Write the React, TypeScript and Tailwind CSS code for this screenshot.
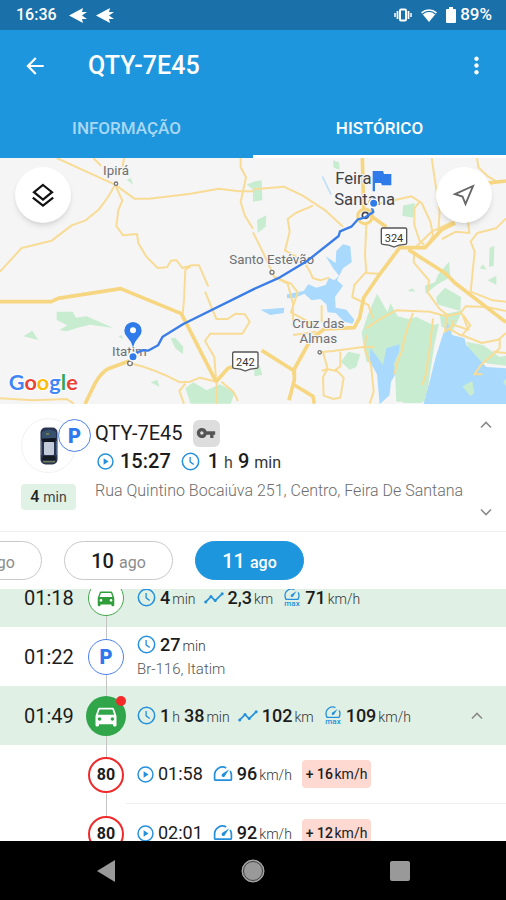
import React from 'react';
import { MdArrowBack, MdMoreVert, MdVpnKey, MdDirectionsCar } from 'react-icons/md';

interface Measure {
  value: string;
  unit?: string;
}

function ClockIcon({ className }: { className: string }) {
  return (
    <svg viewBox="0 0 20 20" className={className} fill="none" stroke="#2490dc" strokeWidth="1.6">
      <circle cx="10" cy="10" r="8.6" />
      <path d="M9.6 5.2v5.2l3.8 2.8" strokeWidth="1.4" />
    </svg>
  );
}

function PlayIcon({ className }: { className: string }) {
  return (
    <svg viewBox="0 0 20 20" className={className} fill="none" stroke="#2490dc" strokeWidth="1.7">
      <circle cx="10" cy="10" r="8.8" />
      <path d="M7.8 6.2v7.6l5.8-3.8z" fill="#2490dc" stroke="none" />
    </svg>
  );
}

function RouteIcon() {
  return (
    <svg viewBox="0 0 20 12" className="h-3 w-5" fill="none" stroke="#2490dc" strokeWidth="1.7">
      <path d="M1.5 10.2L7 4.6l4.2 4 7.2-7" />
      <g fill="#2490dc" stroke="none">
        <circle cx="1.7" cy="10.1" r="1.5" />
        <circle cx="7" cy="4.6" r="1.5" />
        <circle cx="11.2" cy="8.6" r="1.5" />
        <circle cx="18.2" cy="1.8" r="1.5" />
      </g>
    </svg>
  );
}

function SpeedIcon() {
  return (
    <svg viewBox="0 0 20 16" className="h-4 w-5" fill="none" stroke="#2490dc" strokeWidth="1.7">
      <path d="M13.2 1.9A8 8 0 0 0 1.6 9v4.2q0 1 1 1h14.8q1 0 1-1V9a8 8 0 0 0-1.300-4" />
      <path d="M16.2 3.200l-4.600 7.200a1.700 1.700 0 1 1-2.500-2.300z" fill="#2490dc" stroke="none" />
    </svg>
  );
}

function MaxSpeedIcon() {
  return (
    <svg viewBox="0 0 18 19" className="h-[19px] w-[18px]" fill="none" stroke="#2490dc" strokeWidth="1.3">
      <path d="M11.4 1.6A6.600 6.600 0 0 0 2 7.600c0 1.500.3 2.600 1 3.800h12c.7-1.200 1-2.300 1-3.800 0-1.300-.3-2.300-.9-3.300" />
      <path d="M13.6 3l-3.600 5.500a1.300 1.300 0 1 1-2-1.700z" fill="#2490dc" stroke="none" />
      <text x="9" y="18" textAnchor="middle" fontSize="8" fontWeight="500" fill="#2490dc" stroke="none">
        max
      </text>
    </svg>
  );
}

function Chevron({ up = false }: { up?: boolean }) {
  return (
    <svg viewBox="0 0 12 8" className="h-2 w-3" fill="none" stroke="#8a8a8a" strokeWidth="1.6">
      <path d={up ? 'M1 6.500l5-5 5 5' : 'M1 1.500l5 5 5-5'} />
    </svg>
  );
}

function StatusBar() {
  const plane = 'M0 7.500L14 0l-1 4h5l-5 3.500 5 3.500h-5l1 4z';
  return (
    <div className="flex h-[30px] shrink-0 items-center bg-[#1a70a9] pr-3.5 pl-4 text-base font-medium text-white">
      <span>16:36</span>
      <svg viewBox="0 0 46 15" className="ml-3 h-[15px] w-[46px]" fill="#fff">
        <path d={plane} />
        <path d={plane} transform="translate(27 0)" />
      </svg>
      <svg viewBox="0 0 18 14" className="ml-auto h-3.5 w-[18px]" fill="none" stroke="#fff">
        <rect x="6" y="1.500" width="6" height="11" rx="1" strokeWidth="2" />
        <path d="M3.500 3v8M14.500 3v8" strokeWidth="1.800" />
        <path d="M1 5v4M17 5v4" strokeWidth="1.500" />
      </svg>
      <svg viewBox="0 0 18 16" className="ml-2 h-4 w-[18px]" fill="none">
        <path d="M1 5.200a12.500 12.500 0 0 1 16 0L9 15z" fill="#fff" />
        <path d="M2.500 7a9.500 9.500 0 0 1 13 0" stroke="#1a70a9" strokeWidth="1.200" />
      </svg>
      <svg viewBox="0 0 10 16" className="ml-2 h-4 w-2.5" fill="#fff">
        <path d="M3 0h4v2h2a1 1 0 0 1 1 1v12a1 1 0 0 1-1 1H1a1 1 0 0 1-1-1V3a1 1 0 0 1 1-1h2z" />
      </svg>
      <span className="ml-1 text-[17px]">89%</span>
    </div>
  );
}

function Header() {
  return (
    <header className="shrink-0 bg-[#1e96dd] text-white">
      <div className="flex h-[71px] items-center pr-4 pl-[22px]">
        <button aria-label="Voltar">
          <MdArrowBack className="size-[26px]" />
        </button>
        <h1 className="ml-10 text-[25px] font-medium">QTY-7E45</h1>
        <button aria-label="Mais opções" className="ml-auto">
          <MdMoreVert className="size-[27px]" />
        </button>
      </div>
      <nav className="grid h-[57px] grid-cols-2 pt-0.5 text-[17px] font-medium">
        <button className="border-b-[3px] border-transparent text-[#a9d8f5]">INFORMAÇÃO</button>
        <button className="border-b-[3px] border-white">HISTÓRICO</button>
      </nav>
    </header>
  );
}

function RoadShield({ x, y, label }: { x: number; y: number; label: string }) {
  return (
    <g transform={`translate(${x} ${y})`}>
      <path
        d="M-34-29H34Q38-29 38-25V16Q38 20 33 20Q14 20 0 28Q-14 20-33 20Q-38 20-38 16V-25Q-38-29-34-29Z"
        fill="#fff"
        stroke="#555"
        strokeWidth="4"
      />
      <text y="12" textAnchor="middle" fontSize="33" fill="#333" stroke="none">
        {label}
      </text>
    </g>
  );
}

function RouteMap() {
  return (
    <svg viewBox="0 9 1518 738" preserveAspectRatio="xMidYMid slice" className="h-full w-full font-[Roboto,sans-serif]">
      <rect y="9" width="1518" height="738" fill="#f5f5f5" />
      {/* parks */}
      <g fill="#c8ecd0">
        <path d="M170 470l48 0 10 18 32-4 80 35-70-10-32 8-38 12-22-4 24-14-32-16z" />
        <path d="M70 544l27-17 18 28zM512 550l14-2 24 28-2 22-22-18zM380 74l12-6 8 22zM355 545l10-5 4 12zM452 682l20-8 6 22zM740 88l19-6v22z" />
        <path d="M556 700l24-18 40 24 40-18 44 24-12 34H572z" />
      </g>
      <g transform="translate(759 0)">
        <g fill="#c8ecd0">
          <path d="M0 80l26-4 2 60-28 4zM12 195l28-14-2 34-24 18zM450 152l36-8-6 44-32-6zM240 16l18 6 2 22-18-6zM710 278l14-6-2 60-14 4zM680 340l10-12 10 16zM704 376l26-14v28zM4 640l16-10 8 30-24 4zM464 408l14-8 10 10z" />
          <path d="M516 392l30-10 10-24 32-38 4 46-38 22-36 28zM550 426l26-28 48 28-2 42-70-20z" />
          <path d="M344 480l28-64 32 56 8-28 22 40 32 8 24-6 50 24-10 40-8 60-6 130H430l-4-90-38-20-48-10-14-86z" />
          <path d="M264 620l22-30 36 8-12 38-20 8zM510 516l48-10-14 64-12 80-10 66-16 28H450l8-160zM560 480l70-14-30 60-34-10zM640 560l50 10 50 36 19-4v30l-50-6-50-10z" />
        </g>
        <g fill="#a9d9fd">
          <path d="M218 304l30 20 2-36 20-20 22 6 4 48-26 18-18 36 18 16-24 34 2 32 32 6 24 30-6 12-24-6-26-26-24-2-4-24-18-16-26 4-22-20-28 12-24 2v-12l50-10 14-20 24 10 28-8 10-22 16 8 14-14-16-20z" />
          <path d="M22 464l72-6-2 16-40 6z" />
          <path d="M352 580l16 20 22 30 10-50 40-12-2 24-16 34 6 30-14 24-4 40-30 28-8-90-22-40z" />
          <path d="M568 544l16-42 14 38 36 10 6 20 32 36 28 30 59 4v107H512l16-60 20-80z" />
        </g>
        <path d="M628 694l30-16 6 36-12 10zM750 680l9-8v22z" fill="#c8ecd0" />
        <path d="M208 64l26 54" stroke="#bfe0f8" strokeWidth="5" />
      </g>
      {/* secondary roads */}
      <g fill="none" stroke="#f8dc96" strokeWidth="6" strokeLinejoin="round">
        <path d="M170 9l175 80 58 42 44 0 120-14 90-16 60 8 42 0" />
        <path d="M280 9l24 24M372 9l-4 26M345 89q-20 40-50 76l-40 32-40 14-60 46-90 22L0 350" />
        <path d="M345 89l22 48-12 28-6 48 20 28 42-4 4 28 24 40 34 34 28-2 12-20 16-2 18 24 26-8 24 0 28 64M572 334l-16 10-4 90-4 42" />
        <path d="M722 9l0 28 16 30-16 74 12 40 25 40M615 410l34 82 34 0 24-16 28 2 14 22-22 36-96 0-16 22 28 48 6 80" />
        <path d="M390 624q80 20 150 58l30-2 30-12 50 12v66M556 686l-18 22 14 38M0 730l100 6 100-4 22 14M664 680l36 30 14 28" />
        <g transform="translate(759 0)">
          <path d="M0 103l92-8 56 26 70 46 52 48M180 152l-52 22-24 18 6 38-14 56 54 30 20 32 10 22 22 6 26-8M0 232l30 60 34 74 50 20 20 26-20 60 70 38M64 366l40 20 16 60v60M206 450v50" />
          <path d="M340 210l-4 90 4 50-36 40-6 36 48 24 14 40M340 354l38 2M376 146l100-22 30 20 26 56 8 40-12 24M536 9l16 110 8 50-4 60-12 20M500 140l-16 20 0 50 16 48 14 12M672 9l4 28 30 28 24 14M600 200l-64 30-50 48M645 200l4 34-40-4-42 22M759 190l-30 30-56 14-20 26 12 30-12 120 66 26 40 4" />
          <path d="M484 288l-2 34 46 54-4 36 36 50 26 20 36-8 16-20 64 2 57 12M340 520q40-30 90-54l100 4 50 14-4 46 26-20 44 14-20-50M480 474l-20 54-14 60-12 30-10 40M540 490l-10 90-12 80-10 30M602 494l-10 30 34 18 26-30-20-30M626 540l60 24 50-10 23-20M740 550l0 30-56 50-20 28h24M720 590l39 4" />
          <path d="M120 540l70-10M200 592l40-4 90-12 34 0M210 592l14 50-14 24 2 56 30 10 20-4 10-60-20-20-30-6-16 6M262 590l0 44-20 14M340 540l-6 40 20 50 8 80-12 36M120 640l0 20" />
        </g>
      </g>
      {/* highways */}
      <g fill="none" stroke="#f7d681" strokeWidth="11" strokeLinejoin="round">
        <path d="M0 440l154 0 20-10 188-29 182 75 104 204M255 747l30-62q20-34 40-44l64-24M648 680l36-40 30-10" />
        <g transform="translate(759 0)">
          <path d="M328 9l4 150M350 180l50 36M759 78l-70 8M606 204l-40 20-50 54-76 0-60 80-48 70-12 60-16 30-90 4-40 30-50 90 0 34-16 60M26 586l98 62M124 690l56 34 4 22M466 284l110 70 30 30 153 118" />
          <circle cx="336" cy="184" r="22" strokeWidth="9" />
        </g>
      </g>
      <g fontSize="40" fill="#6f7073" stroke="#f5f5f5" strokeWidth="6" paintOrder="stroke" textAnchor="middle">
        <text x="348" y="60">Ipirá</text>
        <text x="815" y="326">Santo Estévão</text>
        <text x="955" y="518">Cruz das</text>
        <text x="955" y="564">Almas</text>
        <text x="388" y="602">Itatim</text>
        <g fontSize="50" fill="#424346">
          <text x="1060" y="88">Feira</text>
          <text x="1094" y="150">Santana</text>
        </g>
      </g>
      <g fill="#fff" stroke="#777" strokeWidth="4">
        <circle cx="348" cy="86" r="5" />
        <circle cx="390" cy="625" r="7" />
        <circle cx="816" cy="352" r="6" />
        <circle cx="959" cy="592" r="5" />
        <circle cx="1096" cy="181" r="9" stroke="#444" strokeWidth="5" />
      </g>
      <RoadShield x={1182} y={248} label="324" />
      <RoadShield x={736} y={620} label="242" />
      {/* driven route */}
      <path
        d="M399 605q20-24 45-18l30-16 14-26 62-38 210-104 80-36 80-48 96-76 4-14 34-14 20-22 22-6 24-16-4-12 6-30"
        fill="none"
        stroke="#3a7de8"
        strokeWidth="7"
        strokeLinejoin="round"
      />
      <g fill="#2f7be9">
        <path d="M399 577q-5-18-17-30-9-9-9-20a26 26 0 0 1 52 0q0 11-9 20-12 12-17 30z" />
        <circle cx="399" cy="526" r="9" fill="#fff" />
        <circle cx="399" cy="605" r="13" stroke="#fff" strokeWidth="5" />
        <circle cx="1121" cy="145" r="13" stroke="#fff" strokeWidth="5" />
        <path d="M1118 48h31l3 9h22v34h-28l-3-7h-18v25h-7z" />
      </g>
      <text
        x="26"
        y="704"
        fontSize="65"
        fontWeight="700"
        className="font-[Lato,sans-serif]"
        stroke="#fff"
        strokeWidth="6"
        paintOrder="stroke"
      >
        <tspan fill="#4285f4">G</tspan>
        <tspan fill="#ea4335">o</tspan>
        <tspan fill="#fbbc05">o</tspan>
        <tspan fill="#4285f4">g</tspan>
        <tspan fill="#34a853">l</tspan>
        <tspan fill="#ea4335">e</tspan>
      </text>
    </svg>
  );
}

function MapPanel() {
  return (
    <section className="relative h-[246px] shrink-0 overflow-hidden">
      <RouteMap />
      <button
        aria-label="Camadas"
        className="absolute top-[9px] left-[15px] flex size-14 items-center justify-center rounded-full bg-white shadow-md"
      >
        <svg viewBox="0 0 24 26" className="h-[26px] w-6" fill="none" stroke="#111" strokeWidth="2.2">
          <path d="M12 3l9 7.200-9 7.300-9-7.300z" />
          <path d="M1.800 15.700L12 23.700l10.200-8" />
        </svg>
      </button>
      <button
        aria-label="Minha posição"
        className="absolute top-[9px] right-[14px] flex size-14 items-center justify-center rounded-full bg-white shadow-md"
      >
        <svg viewBox="0 0 24 24" className="size-6" fill="none" stroke="#666" strokeWidth="1.9">
          <path d="M21 3L3 11.200l7.500 2.300 3 7.500z" />
        </svg>
      </button>
    </section>
  );
}

function Vehicle() {
  return (
    <section className="flex h-32 shrink-0 border-b border-[#eeeeee]">
      <div className="flex w-[95px] flex-col pt-3.5 pl-[21px]">
        <div className="relative flex size-[55px] items-center justify-center rounded-full border border-[#f1f1f1]">
          <svg viewBox="0 0 18 38" className="h-[38px] w-[18px]">
            <rect x=".5" y=".5" width="17" height="37" rx="5" fill="#29344f" />
            <path d="M2 5q7-5 14 0v6H2z" fill="#36506e" />
            <path d="M2 12l14-1-1 4H3z" fill="#10161f" />
            <rect x="4" y="15" width="10" height="13" rx="1" fill="#c3cbda" />
            <path d="M3 29h12l1 4H2z" fill="#151b22" />
            <path d="M3 34h12v1.500H3zM6 6h3v2H6z" fill="#6d7b54" />
            <path d="M1.500 14v14M16.500 14v14" stroke="#4b6285" />
          </svg>
          <span className="absolute top-0 left-[36px] flex size-[33px] items-center justify-center rounded-full border border-[#4a7fee] bg-white text-xl font-black text-[#2f78ee]">
            P
          </span>
        </div>
        <span className="mt-[11px] w-[55px] rounded-sm bg-[#e0f1e5] text-center text-base leading-[26px] font-medium text-[#222]">
          4 <span className="text-sm font-normal text-[#444]">min</span>
        </span>
      </div>
      <div className="min-w-0 flex-1 pt-[15px]">
        <div className="flex h-7 items-center gap-2.5 text-xl text-[#1c1c1c]">
          <h2>QTY-7E45</h2>
          <span className="flex size-[27px] items-center justify-center rounded-md bg-[#dddddd]">
            <MdVpnKey className="size-5 text-[#555]" />
          </span>
        </div>
        <div className="flex h-7 items-center text-xl font-medium text-[#1c1c1c]">
          <PlayIcon className="mr-1.5 ml-0.5 size-[17px]" />
          <span>15:27</span>
          <ClockIcon className="mr-2 ml-2.5 size-[19px]" />
          <span>
            1 <span className="text-base font-normal text-[#444]">h</span> 9{' '}
            <span className="text-base font-normal text-[#333]">min</span>
          </span>
        </div>
        <p className="mt-1 text-base leading-6 font-light whitespace-nowrap text-[#6c6c6c]">
          Rua Quintino Bocaiúva 251, Centro, Feira De Santana
        </p>
      </div>
      <div className="flex flex-col justify-between pt-[17px] pr-3.5 pb-[15px]">
        <button aria-label="Anterior"><Chevron up /></button>
        <button aria-label="Seguinte"><Chevron /></button>
      </div>
    </section>
  );
}

function DayPicker() {
  const days = ['09', '10', '11'];
  return (
    <div className="flex h-[57px] shrink-0 items-center gap-[22px] overflow-hidden">
      {days.map((day) => (
        <button
          key={day}
          className={
            'h-[39px] w-[109px] shrink-0 rounded-full border text-xl font-medium first:-ml-[67px] ' +
            (day === '11' ? 'border-[#1e96dd] bg-[#1e96dd] text-white' : 'border-[#c9c9c9] bg-white text-[#1c1c1c]')
          }
        >
          {day} <span className={day === '11' ? 'text-base' : 'text-base font-normal text-[#8c8c8c]'}>ago</span>
        </button>
      ))}
    </div>
  );
}

function Measures({ items }: { items: Measure[] }) {
  return (
    <span className="whitespace-nowrap">
      {items.map((item) => (
        <span key={item.unit} className="mr-1 last:mr-0">
          {item.value}
          <span className="ml-0.5 text-sm font-light text-[#333]">{item.unit}</span>
        </span>
      ))}
    </span>
  );
}

function Row({ time, badge, children, green = false }: { time?: string; badge: React.ReactNode; children: React.ReactNode; green?: boolean }) {
  return (
    <li className={'flex h-[59px] shrink-0 ' + (green ? 'bg-[#e0f0e5]' : 'bg-white')}>
      <div className="flex w-[86px] items-center pl-6 text-xl text-[#1c1c1c]">{time}</div>
      <div className="relative flex w-10 items-center justify-center">
        <span className="absolute inset-y-0 left-5 w-px bg-[#c4c4c4]" />
        {badge}
      </div>
      <div className={'flex min-w-0 flex-1 items-center pl-[11px] text-lg font-medium text-[#1c1c1c] ' + (time ? '' : 'border-b border-[#eeeeee]')}>
        {children}
      </div>
    </li>
  );
}

function Trip({ duration, distance, speed }: { duration: Measure[]; distance: string; speed: string }) {
  return (
    <div className="flex items-center">
      <ClockIcon className="mr-1 size-[19px]" />
      <Measures items={duration} />
      <span className="mr-1 ml-2"><RouteIcon /></span>
      <Measures items={[{ value: distance, unit: 'km' }]} />
      <span className="mr-1 ml-2.5"><MaxSpeedIcon /></span>
      <Measures items={[{ value: speed, unit: 'km/h' }]} />
    </div>
  );
}

function SpeedingRow({ time, speed, over }: { time: string; speed: string; over: string }) {
  return (
    <Row
      badge={
        <span className="relative flex size-9 items-center justify-center rounded-full border-2 border-[#f02a2a] bg-white text-base font-bold text-[#1c1c1c]">
          80
        </span>
      }
    >
      <PlayIcon className="mr-1 size-[17px]" />
      <span className="font-normal">{time}</span>
      <span className="mr-1 ml-2.5"><SpeedIcon /></span>
      <Measures items={[{ value: speed, unit: 'km/h' }]} />
      <span className="ml-2.5 rounded-sm bg-[#fdd9d1] px-1 text-sm leading-7 whitespace-nowrap">
        + {over} <span className="-ml-0.5 font-normal">km/h</span>
      </span>
    </Row>
  );
}

function Timeline() {
  return (
    <main className="min-h-0 flex-1 overflow-hidden">
      <ul className="-mt-[21px] flex flex-col">
        <Row
          green
          time="01:18"
          badge={
            <span className="relative flex size-9 items-center justify-center rounded-full border border-[#43a84b] bg-white">
              <MdDirectionsCar className="size-[22px] text-[#2f9e3a]" />
            </span>
          }
        >
          <Trip duration={[{ value: '4', unit: 'min' }]} distance="2,3" speed="71" />
        </Row>
        <Row
          time="01:22"
          badge={
            <span className="relative flex size-9 items-center justify-center rounded-full border border-[#4a7fee] bg-white text-xl font-black text-[#2f78ee]">
              P
            </span>
          }
        >
          <div>
            <div className="flex h-6 items-center">
              <ClockIcon className="mr-1 size-[19px]" />
              <Measures items={[{ value: '27', unit: 'min' }]} />
            </div>
            <p className="text-[15px] leading-6 font-light text-[#555]">Br-116, Itatim</p>
          </div>
        </Row>
        <Row
          green
          time="01:49"
          badge={
            <span className="relative flex size-10 shrink-0 items-center justify-center rounded-full bg-[#31a54a]">
              <MdDirectionsCar className="size-7 text-white" />
              <span className="absolute top-0 right-0 size-2.5 rounded-full bg-[#f52b2b]" />
            </span>
          }
        >
          <Trip duration={[{ value: '1', unit: 'h' }, { value: '38', unit: 'min' }]} distance="102" speed="109" />
          <button aria-label="Recolher" className="mr-[23px] ml-auto"><Chevron up /></button>
        </Row>
        <SpeedingRow time="01:58" speed="96" over="16" />
        <SpeedingRow time="02:01" speed="92" over="12" />
      </ul>
    </main>
  );
}

function SystemNav() {
  return (
    <nav className="grid h-[59px] shrink-0 grid-cols-3 items-center justify-items-center bg-black px-8">
      <button aria-label="Voltar">
        <svg viewBox="0 0 18 22" className="h-[22px] w-[18px]"><path d="M18 0v22L0 11z" fill="#999" /></svg>
      </button>
      <button aria-label="Início">
        <svg viewBox="0 0 24 24" className="size-6">
          <circle cx="12" cy="12" r="11" fill="#999" stroke="#aaa" />
          <circle cx="12" cy="12" r="9.500" fill="none" stroke="#444" />
        </svg>
      </button>
      <button aria-label="Recentes" className="size-5 rounded-xs bg-[#999]" />
    </nav>
  );
}

export default function App() {
  return (
    <div className="flex h-screen flex-col overflow-hidden bg-white font-[Roboto,sans-serif]">
      <StatusBar />
      <Header />
      <MapPanel />
      <Vehicle />
      <DayPicker />
      <Timeline />
      <SystemNav />
    </div>
  );
}
